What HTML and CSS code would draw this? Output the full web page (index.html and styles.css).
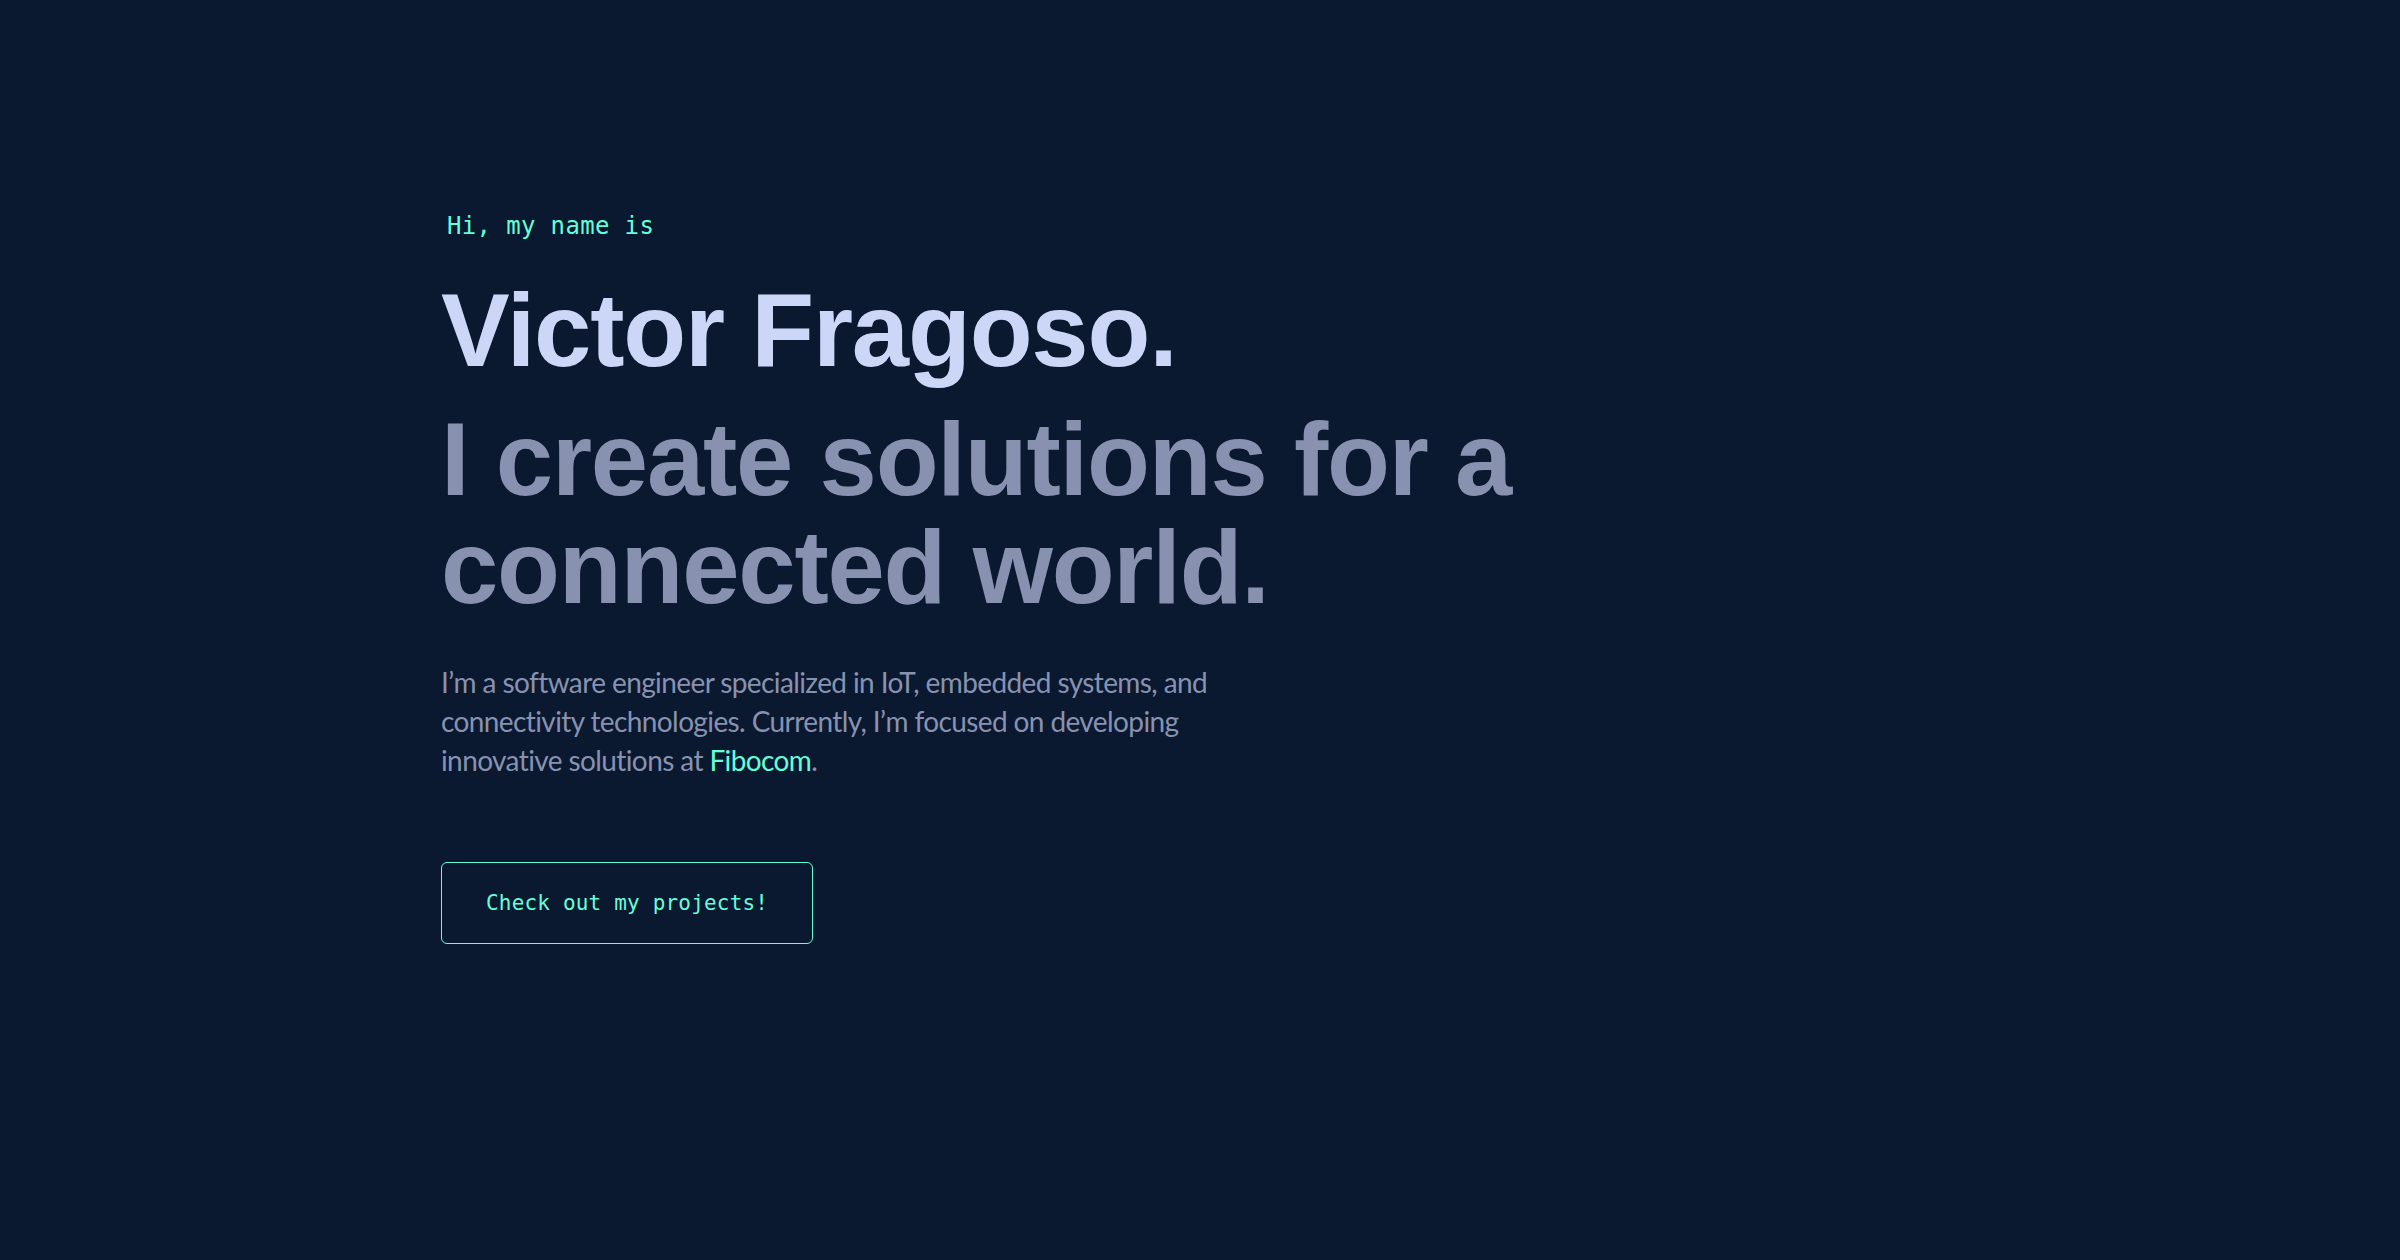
FILE: index.html
```html
<!DOCTYPE html>
<html lang="en">
<head>
<meta charset="utf-8">
<title>Victor Fragoso</title>
<link rel="stylesheet" href="styles.css">
</head>
<body>
<main class="page">
  <section class="hero">
    <h1 class="hero-hi">Hi, my name is</h1>
    <h2 class="hero-name">Victor Fragoso.</h2>
    <h3 class="hero-tagline">I create solutions for a<br>connected world.</h3>
    <p class="hero-intro">I’m a software engineer specialized in IoT, embedded systems, and<br>connectivity technologies. Currently, I’m focused on developing<br>innovative solutions at <a class="hero-link" href="#">Fibocom</a>.</p>
    <a class="hero-button" href="#">Check out my projects!</a>
  </section>
</main>
</body>
</html>
```

FILE: styles.css
```css
html, body {
  margin: 0;
  padding: 0;
  background: #0a192f;
}

body {
  min-height: 1260px;
  font-family: "Liberation Sans", Arial, sans-serif;
  -webkit-font-smoothing: antialiased;
}

.page {
  padding: 0 0 0 441px;
}

.hero {
  display: flex;
  flex-direction: column;
  align-items: flex-start;
  padding-top: 211px;
}

.hero-hi {
  margin: 0 0 36px 6px;
  font-family: "DejaVu Sans Mono", "Liberation Mono", monospace;
  font-size: 24px;
  font-weight: 400;
  line-height: 30px;
  letter-spacing: 0.35px;
  color: #64ffda;
}

.hero-name,
.hero-tagline {
  font-family: "Liberation Sans", Arial, sans-serif;
  font-size: 103px;
  font-weight: 700;
  line-height: 108px;
  letter-spacing: -1.2px;
}

.hero-name {
  margin: 0;
  color: #ccd6f6;
}

.hero-tagline {
  margin: 21px 0 0;
  color: #8892b0;
}

.hero-intro {
  margin: 41px 0 0;
  max-width: 900px;
  font-family: Lato, "Liberation Sans", Arial, sans-serif;
  font-size: 28px;
  line-height: 39px;
  letter-spacing: -0.6px;
  color: #8892b0;
}

.hero-link {
  color: #64ffda;
  text-decoration: none;
}

.hero-button {
  margin-top: 82px;
  box-sizing: border-box;
  height: 82px;
  display: inline-flex;
  align-items: center;
  padding: 0 44px;
  border: 1px solid #64ffda;
  border-radius: 6px;
  font-family: "DejaVu Sans Mono", "Liberation Mono", monospace;
  font-size: 21px;
  line-height: 1;
  letter-spacing: 0.18px;
  color: #64ffda;
  text-decoration: none;
}
```
